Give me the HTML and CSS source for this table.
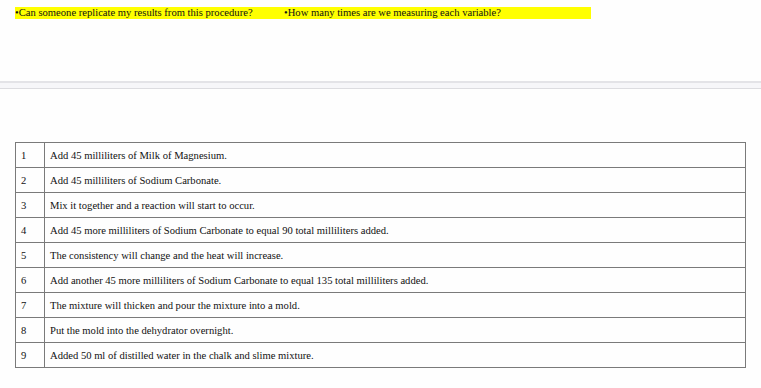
FILE: index.html
```html
<!DOCTYPE html>
<html>
<head>
<meta charset="utf-8">
<link rel="stylesheet" href="styles.css">
</head>
<body>
<div class="questions">
  <span class="q q1">•Can someone replicate my results from this procedure?</span><span class="q q2">•How many times are we measuring each variable?</span>
</div>
<div class="divider"></div>
<table class="steps">
  <tr><td class="num">1</td><td class="txt">Add 45 milliliters of Milk of Magnesium.</td></tr>
  <tr><td class="num">2</td><td class="txt">Add 45 milliliters of Sodium Carbonate.</td></tr>
  <tr><td class="num">3</td><td class="txt">Mix it together and a reaction will start to occur.</td></tr>
  <tr><td class="num">4</td><td class="txt">Add 45 more milliliters of Sodium Carbonate to equal 90 total milliliters added.</td></tr>
  <tr><td class="num">5</td><td class="txt">The consistency will change and the heat will increase.</td></tr>
  <tr><td class="num">6</td><td class="txt">Add another 45 more milliliters of Sodium Carbonate to equal 135 total milliliters added.</td></tr>
  <tr><td class="num">7</td><td class="txt">The mixture will thicken and pour the mixture into a mold.</td></tr>
  <tr><td class="num">8</td><td class="txt">Put the mold into the dehydrator overnight.</td></tr>
  <tr><td class="num">9</td><td class="txt">Added 50 ml of distilled water in the chalk and slime mixture.</td></tr>
</table>
</body>
</html>
```
FILE: styles.css
```css
html, body {
  margin: 0;
  padding: 0;
  background: #fefefe;
}
body {
  font-family: "Liberation Serif", "Times New Roman", serif;
  color: #000;
}
.questions {
  margin: 7px 0 0 15px;
  width: 576px;
  height: 12px;
  background: #ffff00;
  font-size: 10.6px;
  line-height: 12px;
  display: flex;
  white-space: nowrap;
  color: #111;
}
.q1 {
  width: 269px;
}
.divider {
  margin-top: 62px;
  height: 5px;
  border-top: 2px solid #e3e3e7;
  border-bottom: 1px solid #dcdce0;
  background: #f6f6f9;
}
.steps {
  margin: 53px 0 0 15px;
  width: 731px;
  border-collapse: collapse;
  font-size: 10.6px;
  color: #111;
}
.steps td {
  border: 1px solid #7a7a7a;
  height: 24px;
  padding: 0 5px;
  vertical-align: middle;
}
.steps .num {
  width: 18px;
}
```
